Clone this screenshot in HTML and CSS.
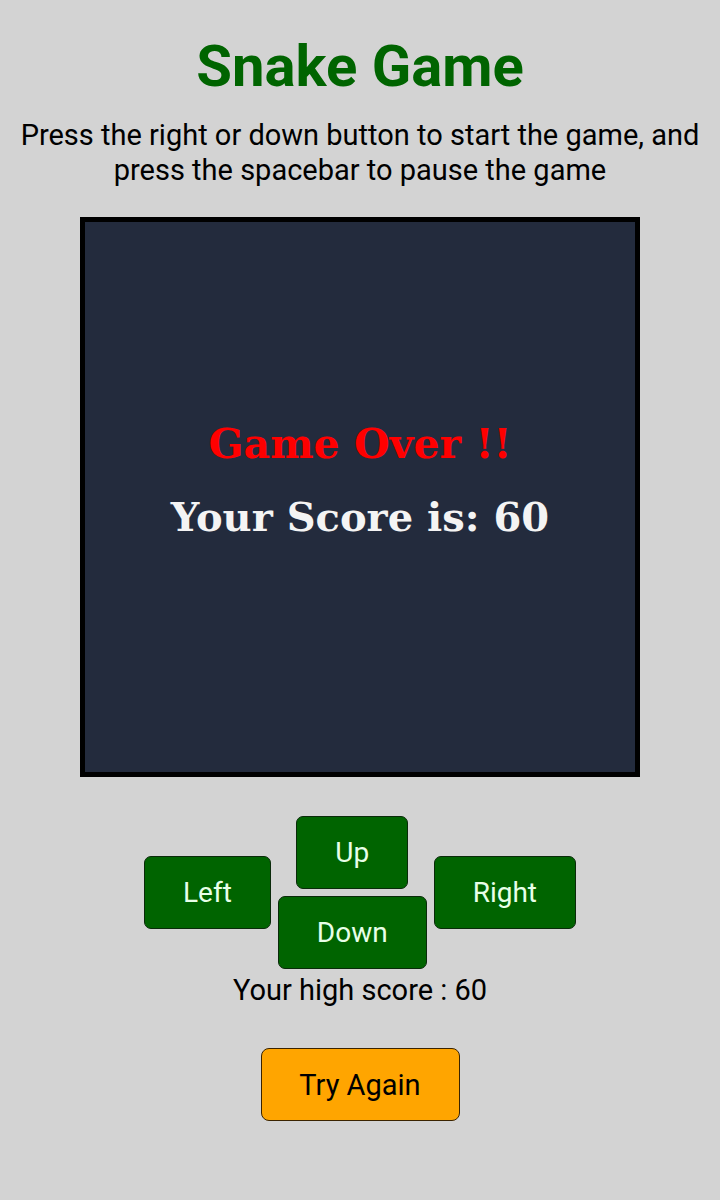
FILE: index.html
```html
<!DOCTYPE html>
<html lang="en">
<head>
<meta charset="utf-8">
<title>Snake Game</title>
<link rel="stylesheet" href="styles.css">
</head>
<body>
<main class="page">
  <h1 class="title">Snake Game</h1>
  <p class="intro">Press the right or down button to start the game, and press the spacebar to pause the game</p>
  <div class="board">
    <div class="over">Game Over !!</div>
    <div class="score">Your Score is: 60</div>
  </div>
  <div class="controls">
    <button class="btn">Left</button>
    <div class="mid">
      <button class="btn">Up</button>
      <button class="btn">Down</button>
    </div>
    <button class="btn">Right</button>
  </div>
  <p class="high">Your high score : 60</p>
  <button class="retry">Try Again</button>
</main>
</body>
</html>
```
FILE: styles.css
```css
html, body {
  margin: 0;
  padding: 0;
  background: #d3d3d3;
}
body {
  font-family: Roboto, "Liberation Sans", sans-serif;
  color: #000;
}
.page {
  display: flex;
  flex-direction: column;
  align-items: center;
  text-align: center;
  padding-top: 30px;
}
.title {
  margin: 0;
  font-size: 58px;
  line-height: 72px;
  font-weight: 700;
  color: #006400;
}
.intro {
  margin: 16px 0 0;
  font-size: 29px;
  line-height: 35px;
  padding: 0 8px;
}
.board {
  margin-top: 29px;
  width: 560px;
  height: 560px;
  box-sizing: border-box;
  border: 5px solid #000;
  background: #232b3d;
  display: flex;
  flex-direction: column;
  align-items: center;
  justify-content: center;
  padding-bottom: 34px;
  font-family: "DejaVu Serif", "Liberation Serif", serif;
  font-weight: 700;
}
.over {
  color: #f00;
  font-size: 41px;
  line-height: 48px;
}
.score {
  color: #f4f4f4;
  font-size: 40px;
  line-height: 48px;
  margin-top: 25px;
}
.controls {
  margin-top: 39px;
  display: flex;
  align-items: center;
  gap: 7px;
}
.mid {
  display: flex;
  flex-direction: column;
  align-items: center;
  gap: 7px;
}
.btn {
  height: 73px;
  padding: 0 38px;
  box-sizing: border-box;
  background: #006400;
  color: #e8ffe8;
  border: 1px solid #0a2a0a;
  border-radius: 7px;
  font-family: Roboto, "Liberation Sans", sans-serif;
  font-size: 28px;
}
.high {
  margin: 4px 0 0;
  font-size: 29px;
  line-height: 34px;
}
.retry {
  margin-top: 41px;
  width: 199px;
  height: 73px;
  background: #ffa500;
  color: #000;
  border: 1px solid #3a2300;
  border-radius: 8px;
  font-family: Roboto, "Liberation Sans", sans-serif;
  font-size: 29px;
}
```
